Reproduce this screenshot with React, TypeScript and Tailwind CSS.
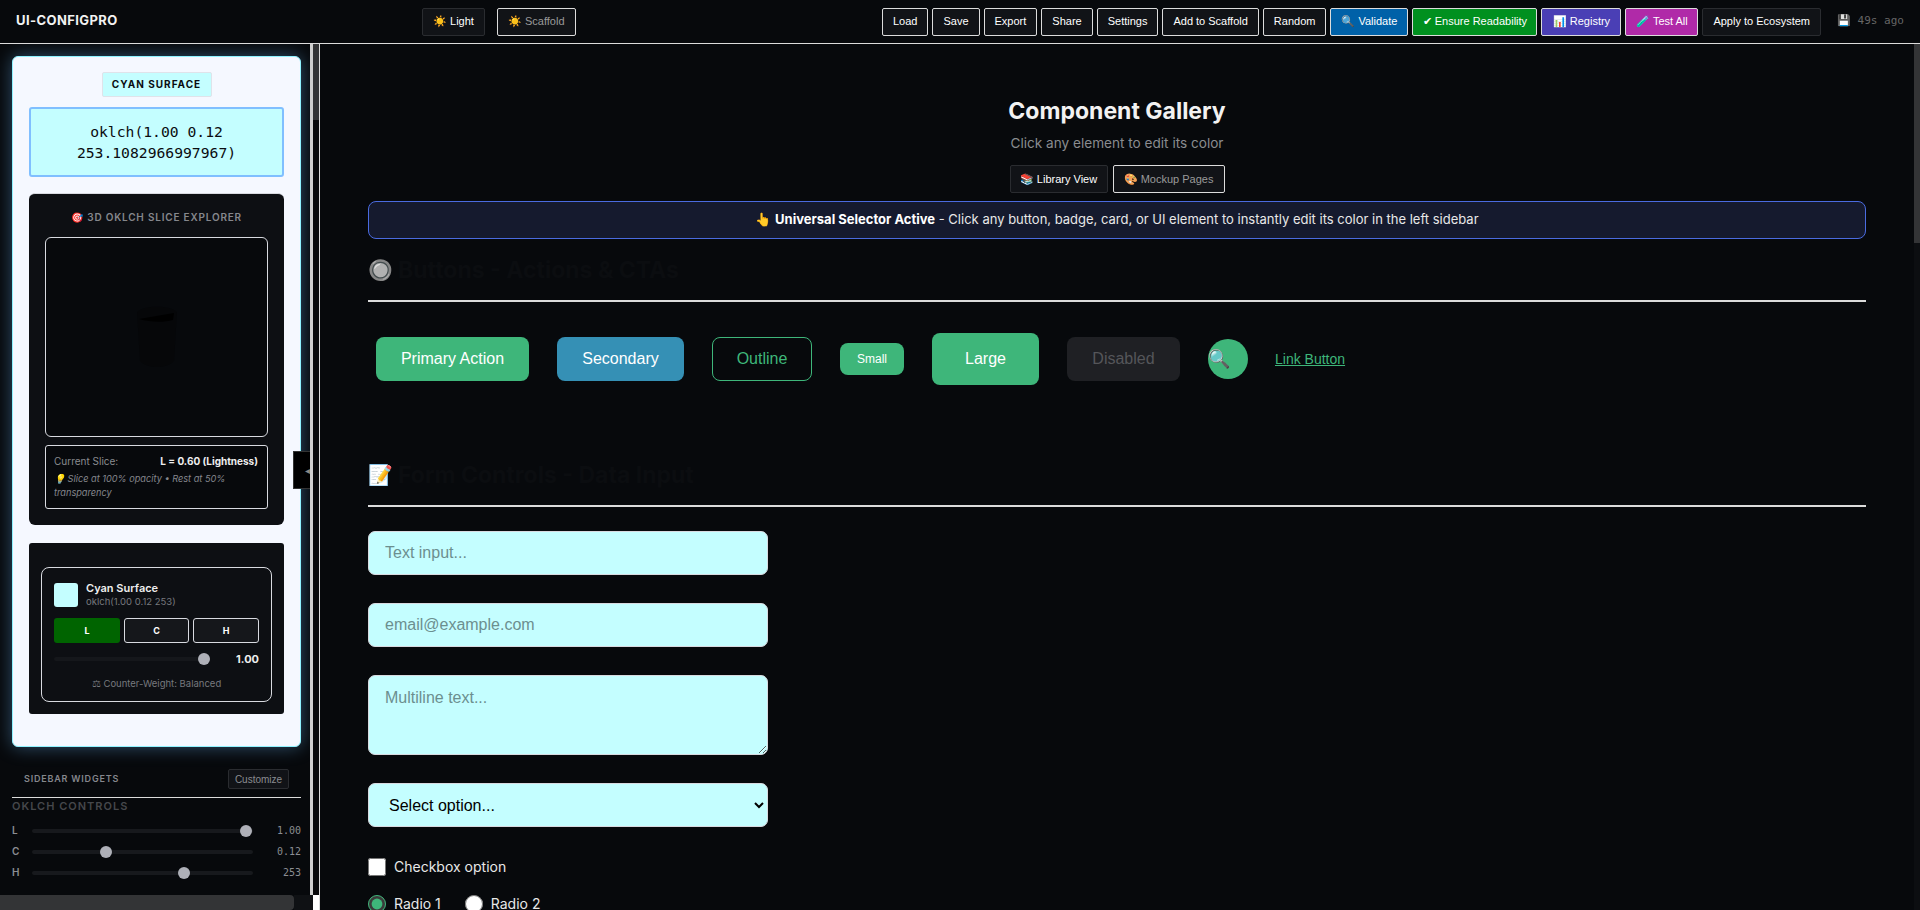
const arial = 'font-["Liberation_Sans",Arial,sans-serif]'

const topButtons = [
  { label: 'Load', cls: 'bg-[#111317] border-[#dcdcdc] text-white' },
  { label: 'Save', cls: 'bg-[#111317] border-[#dcdcdc] text-white' },
  { label: 'Export', cls: 'bg-[#111317] border-[#dcdcdc] text-white' },
  { label: 'Share', cls: 'bg-[#111317] border-[#dcdcdc] text-white' },
  { label: 'Settings', cls: 'bg-[#111317] border-[#dcdcdc] text-white' },
  { label: 'Add to Scaffold', cls: 'bg-[#111317] border-[#dcdcdc] text-white' },
  { label: 'Random', cls: 'bg-[#111317] border-[#dcdcdc] text-white' },
  { label: '🔍 Validate', cls: 'w-[78px] bg-[#0061a8] border-[#dcdcdc] text-white' },
  { label: '✔︎ Ensure Readability', cls: 'w-[125px] whitespace-nowrap !px-0 bg-[#00901f] border-[#dcdcdc] text-white' },
  { label: '📊 Registry', cls: 'w-[80px] !px-0 bg-[#4a3fb5] border-[#dcdcdc] text-white' },
  { label: '🧪 Test All', cls: 'w-[73px] !px-0 bg-[#b02aa8] border-[#dcdcdc] text-white' },
  { label: 'Apply to Ecosystem', cls: 'bg-[#111317] border-[#2a2c30] text-white' },
]

function SmallSlider({ name, value, thumb }: { name: string; value: string; thumb: string }) {
  return (
    <div className="flex items-center h-[21px]">
      <span className="w-5 text-[10px] font-semibold text-[#8b8d92]">{name}</span>
      <div className="relative w-[221px] h-1 rounded-full bg-[#17191d]">
        <span className={`absolute top-1/2 -translate-y-1/2 w-3 h-3 rounded-full bg-[#aeb0b8] ${thumb}`} />
      </div>
      <span className='flex-1 text-right text-[10px] text-[#8b8d92] font-["DejaVu_Sans_Mono",monospace]'>{value}</span>
    </div>
  )
}

function SectionTitle({ icon, text, mt }: { icon: string; text: string; mt: string }) {
  return (
    <div className={`${mt} flex items-center gap-[5px] h-[40px] border-b-2 border-[#dcdcdc] box-content pb-[10px]`}>
      <span className="text-[20px] leading-none">{icon}</span>
      <span className="text-[23px] leading-none text-[#0b0d10] font-bold">{text}</span>
    </div>
  )
}

export default function App() {
  return (
    <div className="h-[910px] w-[1920px] overflow-hidden flex flex-col bg-[#07090c] text-white font-[Inter,sans-serif]">
      <header className="h-[44px] shrink-0 border-b border-[#dcdcdc] flex items-center relative">
        <div className="w-[422px] pl-4 text-[13px] font-bold tracking-[0.4px] text-[#f2f2f2] -mt-[2px]">UI-CONFIGPRO</div>
        <div className={`flex gap-3 text-[11px] ${arial}`}>
          <button className="h-7 px-[10px] bg-[#111317] border border-[#2a2c30] rounded-[2px] text-white">☀️ Light</button>
          <button className="h-7 px-[10px] bg-[#111317] border border-[#dcdcdc] rounded-[2px] text-[#9a9a9a]">☀️ Scaffold</button>
        </div>
        <div className={`ml-auto flex gap-1 text-[11px] ${arial}`}>
          {topButtons.map((b) => (
            <button key={b.label} className={`h-7 px-[10px] border rounded-[2px] ${b.cls}`}>{b.label}</button>
          ))}
        </div>
        <div className='w-[99px] pl-4 text-[11px] text-[#666] whitespace-nowrap font-["DejaVu_Sans_Mono",monospace]'>💾 49s ago</div>
      </header>

      <div className="flex-1 min-h-0 flex">
        <aside className="relative w-[319px] shrink-0 flex flex-col">
          <div className="flex-1 min-h-0 flex">
            <div className="w-[310px] pt-3 pl-3 overflow-hidden">
              <div className="w-[289px] h-[691px] bg-[#f5f8ff] border border-[#8ff2ff] rounded-md shadow-[0_0_18px_rgba(110,190,255,0.4)] px-4 pt-[15px]">
                <div className="w-[110px] h-[25px] mx-auto bg-[#c4feff] border border-[#dfe3ea] rounded-[2px] flex items-center justify-center text-[10px] font-bold tracking-[1px] text-[#0a0c10]">CYAN SURFACE</div>
                <div className='mt-[10px] h-[70px] bg-[#c4feff] border-2 border-[#80bfff] rounded-[3px] flex items-center justify-center text-center text-[14.7px] leading-[21px] text-[#0a0c10] font-["DejaVu_Sans_Mono",monospace]'>
                  oklch(1.00 0.12<br />253.1082966997967)
                </div>

                <div className="mt-4 h-[332px] bg-[#0d0f13] border-t border-[#d8dae0] rounded-md px-4 pt-4">
                  <div className="text-center text-[10px] leading-[14px] font-semibold tracking-[0.8px] text-[#85878c]">🎯 3D OKLCH SLICE EXPLORER</div>
                  <div className="mt-[13px] h-[200px] bg-[#07090c] border border-[#d8dae0] rounded-md flex items-center justify-center">
                    <svg width="42" height="62" viewBox="0 0 42 62">
                      <path d="M1 6 C8 -1 34 -1 41 6 L38 55 C30 63 12 63 4 55 Z" fill="#060709" />
                      <path d="M3 13 L38 7 L37 14 C26 17 14 16 3 13 Z" fill="#000" />
                    </svg>
                  </div>
                  <div className="mt-2 h-[64px] bg-[#07090c] border border-[#d8dae0] rounded-[3px] pl-2 pr-[9px] pt-2">
                    <div className="flex justify-between text-[10px] leading-[14px]">
                      <span className="text-[#8a8c90]">Current Slice:</span>
                      <span className="font-bold text-[#eeeeee]">L = 0.60 (Lightness)</span>
                    </div>
                    <div className="mt-1 text-[9.2px] leading-[14px] italic text-[#85878c]">💡 Slice at 100% opacity • Rest at 50% transparency</div>
                  </div>
                </div>

                <div className="mt-[18px] h-[171px] bg-[#0d0f13] rounded-[3px] px-3 pt-6">
                  <div className="h-[135px] border border-[#d8dae0] rounded-lg px-3 pt-[15px]">
                    <div className="flex items-center gap-2 h-6">
                      <span className="w-6 h-6 rounded-[3px] bg-[#c4feff]" />
                      <div>
                        <div className="text-[11px] leading-[14px] font-semibold text-[#eeeeee]">Cyan Surface</div>
                        <div className="text-[9.5px] leading-[14px] text-[#77797e]">oklch(1.00 0.12 253)</div>
                      </div>
                    </div>
                    <div className="mt-[11px] flex gap-1 text-[9px] font-bold">
                      <span className="w-[66px] h-[25px] rounded-[3px] bg-[#006400] flex items-center justify-center">L</span>
                      <span className="flex-1 h-[25px] rounded-[3px] bg-[#15171b] border border-[#d8dae0] flex items-center justify-center">C</span>
                      <span className="w-[66px] h-[25px] rounded-[3px] bg-[#15171b] border border-[#d8dae0] flex items-center justify-center">H</span>
                    </div>
                    <div className="mt-[10px] flex items-center h-3">
                      <div className="relative w-[156px] h-1 rounded-full bg-[#15171b]">
                        <span className="absolute right-0 top-1/2 -translate-y-1/2 w-3 h-3 rounded-full bg-[#aeb0b8]" />
                      </div>
                      <span className="flex-1 text-right text-[11px] font-bold text-[#eeeeee]">1.00</span>
                    </div>
                    <div className="mt-[12px] text-center text-[9.5px] text-[#77797e]">⚖︎ Counter-Weight: Balanced</div>
                  </div>
                </div>
              </div>

              <div className="mt-[22px] w-[289px] h-[29px] border-b border-[#dcdcdc] flex items-start justify-between px-3">
                <span className="mt-[3px] text-[9px] leading-[14px] font-semibold tracking-[0.8px] text-[#85878c]">SIDEBAR WIDGETS</span>
                <button className={`h-5 w-[61px] text-[10px] bg-[#111317] border border-[#2a2c30] rounded-[2px] text-[#8a8c90] ${arial}`}>Customize</button>
              </div>
              <div className="w-[289px]">
                <div className="mt-[1px] text-[11px] leading-[14px] font-semibold tracking-[1px] text-[#45474b]">OKLCH CONTROLS</div>
                <div className="mt-[7px]">
                  <SmallSlider name="L" value="1.00" thumb="left-[208px]" />
                  <SmallSlider name="C" value="0.12" thumb="left-[68px]" />
                  <SmallSlider name="H" value="253" thumb="left-[146px]" />
                </div>
              </div>
            </div>
            <div className="w-[3px] bg-[#cfcfcf]" />
            <div className="w-[6px] bg-[#08090b]"><div className="h-[76px] bg-[#333436]" /></div>
          </div>
          <div className="h-[15px] shrink-0 flex">
            <div className="w-[294px] bg-[#333436] rounded-r-sm" />
            <div className="w-[19px] bg-[#0f1114]" />
            <div className="w-[6px] bg-white" />
          </div>
          <button className="absolute left-[293px] top-[407px] w-[17px] h-[38px] bg-black border-y border-l border-[#333] text-[#888] text-[10px] overflow-hidden text-right leading-none">◂</button>
        </aside>
        <div className="w-px shrink-0 bg-[#dcdcdc]" />

        <main className="flex-1 min-w-0 overflow-hidden px-12 pt-[52px]">
          <div className="flex flex-col items-center">
            <h1 className="text-[23px] leading-[30px] font-bold text-[#f2f2f2]">Component Gallery</h1>
            <p className="mt-[9px] text-[13.6px] leading-[17px] text-[#8a8c90]">Click any element to edit its color</p>
            <div className={`mt-[13px] flex gap-[5px] text-[11px] ${arial}`}>
              <button className="h-7 w-[98px] bg-[#111317] border border-[#2a2c30] rounded-[2px] text-white">📚 Library View</button>
              <button className="h-7 w-[112px] bg-[#111317] border border-[#dcdcdc] rounded-[2px] text-[#9a9a9a]">🎨 Mockup Pages</button>
            </div>
          </div>
          <div className="mt-2 h-[38px] bg-[#151a2e] border border-[#4a6be0] rounded-lg flex items-center justify-center text-[13px] text-[#e8e8e8]">
            <span>👆 <b className="font-bold text-white">Universal Selector Active</b> - Click any button, badge, card, or UI element to instantly edit its color in the left sidebar</span>
          </div>

          <SectionTitle icon="🔘" text="Buttons - Actions & CTAs" mt="mt-[11px]" />

          <div className={`mt-[30px] flex items-center gap-7 pl-2 h-[54px] ${arial}`}>
            <button className="h-[44px] w-[153px] bg-[#3eb67a] rounded-lg text-[16px] text-white">Primary Action</button>
            <button className="h-[44px] w-[127px] bg-[#3590b5] rounded-lg text-[16px] text-white">Secondary</button>
            <button className="h-[44px] w-[100px] border border-[#3eb67a] rounded-lg text-[16px] text-[#3eb67a]">Outline</button>
            <button className="h-8 w-16 bg-[#3eb67a] rounded-lg text-[12px] text-white">Small</button>
            <button className="h-[52px] w-[107px] bg-[#3eb67a] rounded-lg text-[16px] text-white">Large</button>
            <button className="h-[44px] w-[113px] bg-[#1f2024] rounded-lg text-[16px] text-[#55565a]">Disabled</button>
            <button className="h-10 w-10 bg-[#3eb67a] rounded-full text-[18px] flex items-center justify-start">🔍</button>
            <a className="-ml-[1px] text-[14px] text-[#3eb67a] underline">Link Button</a>
          </div>

          <SectionTitle icon="📝" text="Form Controls - Data Input" mt="mt-[69px]" />

          <div className={`mt-6 w-[400px] flex flex-col gap-7 text-[16px] ${arial}`}>
            <input className="h-[44px] px-4 bg-[#c4feff] rounded-[7px] border border-[#d8dae0] placeholder:text-[#6c8f8f]" placeholder="Text input..." />
            <input className="h-[44px] px-4 bg-[#c4feff] rounded-[7px] border border-[#d8dae0] placeholder:text-[#6c8f8f]" placeholder="email@example.com" />
            <textarea className="h-[80px] px-4 py-[10px] bg-[#c4feff] rounded-[7px] border border-[#d8dae0] placeholder:text-[#6c8f8f]" placeholder="Multiline text..." />
            <select className="h-[44px] px-4 bg-[#c4feff] rounded-[7px] border border-[#d8dae0] text-black">
              <option>Select option...</option>
            </select>
          </div>
          <label className="mt-[29px] flex items-center gap-2 text-[14px] text-[#e8e8e8]">
            <input type="checkbox" className="w-[18px] h-[18px]" /> Checkbox option
          </label>
          <div className="mt-4 flex items-center text-[14px] text-[#e8e8e8]">
            <label className="flex items-center gap-2"><input type="radio" name="r" defaultChecked className="w-[18px] h-[18px] accent-[#3eb67a]" /> Radio 1</label>
            <label className="ml-6 flex items-center gap-2"><input type="radio" name="r" className="w-[18px] h-[18px]" /> Radio 2</label>
          </div>
        </main>
        <div className="w-[6px] shrink-0 bg-[#0c0e11]"><div className="h-[199px] bg-[#333436]" /></div>
      </div>
    </div>
  )
}
